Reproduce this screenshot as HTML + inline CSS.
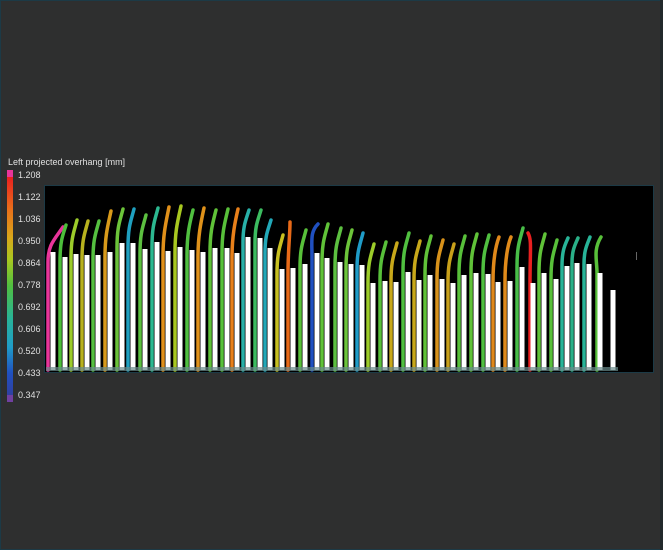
<!DOCTYPE html>
<html><head><meta charset="utf-8"><style>
html,body{margin:0;padding:0}
body{width:663px;height:550px;background:#2e2f2f;position:relative;overflow:hidden;font-family:"Liberation Sans",sans-serif}
.frame{position:absolute;left:0;top:0;width:661px;height:548px;border:1px solid #1c3a46}
.t{position:absolute;font-size:9px;color:#e0e0e0;line-height:10px}
</style></head><body>
<div class="frame"></div>
<div style="position:absolute;left:660px;top:0;width:3px;height:550px;background:#22292b"></div>
<div class="t" style="left:8px;top:157px">Left projected overhang [mm]</div>
<svg width="663" height="550" style="position:absolute;left:0;top:0">
<defs><linearGradient id="g" x1="0" y1="0" x2="0" y2="1">
<stop offset="0" stop-color="#e82020"/><stop offset="0.15" stop-color="#e8701a"/><stop offset="0.28" stop-color="#d8a81a"/><stop offset="0.38" stop-color="#a8c820"/><stop offset="0.5" stop-color="#50c040"/><stop offset="0.65" stop-color="#28b498"/><stop offset="0.78" stop-color="#1f9cc8"/><stop offset="0.9" stop-color="#2050c0"/><stop offset="1" stop-color="#3040a0"/></linearGradient></defs>
<rect x="7" y="170" width="6" height="7" fill="#e8359a"/>
<rect x="7" y="177" width="6" height="218" fill="url(#g)"/>
<rect x="7" y="395" width="6" height="7" fill="#7040a0"/>
<rect x="44.5" y="185.5" width="609" height="187" fill="#000" stroke="#1c3a46"/>
<g fill="none" stroke-width="3.5" stroke-linecap="round">
<path stroke="#e8359a" d="M48 370V262C48 245 54 240 63 227"/>
<path stroke="#4cbf3a" d="M60 370V262C60 240 63 235 66 225"/>
<path stroke="#9ccc2a" d="M71 370V259C71 237 74 232 77 220"/>
<path stroke="#b8b21e" d="M82 370V260C82 238 85 233 88 221"/>
<path stroke="#55c040" d="M93 370V260C93 238 96 233 99 221"/>
<path stroke="#d89a1a" d="M105 370V257C105 235 108 225 111 211"/>
<path stroke="#6cc43a" d="M117 370V248C117 226 120 221 123 209"/>
<path stroke="#1fa0c0" d="M128 370V248C128 226 131 221 134 209"/>
<path stroke="#5cc040" d="M140 370V254C140 232 143 227 146 215"/>
<path stroke="#2cb890" d="M152 370V247C152 225 155 220 158 208"/>
<path stroke="#e0901a" d="M163 370V256C163 234 166 222 169 207"/>
<path stroke="#a8c820" d="M175 370V252C175 230 178 220 181 206"/>
<path stroke="#50c040" d="M187 370V255C187 233 190 222 193 210"/>
<path stroke="#e0921a" d="M198 370V257C198 235 201 222 204 208"/>
<path stroke="#60c238" d="M210 370V253C210 231 213 222 216 210"/>
<path stroke="#58c03a" d="M222 370V253C222 231 225 222 228 209"/>
<path stroke="#e8801a" d="M232 370V258C232 236 235 222 238 209"/>
<path stroke="#28b0a8" d="M243 370V242C243 225 246 220 249 210"/>
<path stroke="#3cbc60" d="M255 370V243C255 225 258 220 261 210"/>
<path stroke="#22a8b8" d="M265 370V253C265 235 268 230 271 220"/>
<path stroke="#c8c020" d="M277 370V274C277 252 280 247 283 235"/>
<path stroke="#e86a18" d="M288 370V273C288 251 290 235 290 222"/>
<path stroke="#58c03a" d="M300 370V269C300 247 303 242 306 230"/>
<path stroke="#2050c0" d="M312 370V258C312 240 310 232 318 224"/>
<path stroke="#60c238" d="M322 370V263C322 241 325 236 328 224"/>
<path stroke="#5cc040" d="M335 370V267C335 245 338 240 341 228"/>
<path stroke="#6cc43a" d="M346 370V269C346 247 349 242 352 230"/>
<path stroke="#1f9cc8" d="M357 370V270C357 250 360 245 363 233"/>
<path stroke="#9ccc2a" d="M368 370V283C368 261 371 256 374 244"/>
<path stroke="#58c03a" d="M380 370V281C380 259 383 254 386 242"/>
<path stroke="#c8a81a" d="M391 370V282C391 260 394 255 397 243"/>
<path stroke="#50c040" d="M403 370V272C403 250 406 245 409 233"/>
<path stroke="#c8a81a" d="M414 370V280C414 258 417 253 420 241"/>
<path stroke="#60c238" d="M425 370V275C425 253 428 248 431 236"/>
<path stroke="#d8921a" d="M437 370V279C437 257 440 252 443 240"/>
<path stroke="#c8a01a" d="M448 370V283C448 261 451 256 454 244"/>
<path stroke="#58c03a" d="M459 370V275C459 253 462 248 465 236"/>
<path stroke="#60c238" d="M471 370V273C471 251 474 246 477 234"/>
<path stroke="#50c040" d="M483 370V274C483 252 486 247 489 235"/>
<path stroke="#e0881a" d="M493 370V282C493 260 496 245 499 237"/>
<path stroke="#e08a1a" d="M505 370V281C505 259 508 244 511 237"/>
<path stroke="#48be48" d="M517 370V267C517 245 520 240 523 228"/>
<path stroke="#e82020" d="M530 370V283C530 250 532 240 528 233"/>
<path stroke="#60c238" d="M539 370V273C539 251 542 246 545 234"/>
<path stroke="#58c03a" d="M551 370V279C551 257 554 252 557 240"/>
<path stroke="#28b498" d="M562 370V266C562 250 565 245 568 238"/>
<path stroke="#2ab088" d="M572 370V263C572 250 575 245 578 238"/>
<path stroke="#28b498" d="M584 370V264C584 250 587 245 590 237"/>
<path stroke="#58c03a" d="M597 370V273C597 260 593 250 601 237"/>
</g>
<path fill="none" stroke="#fff" stroke-width="5" d="M53 370V252M65 370V257M76 370V254M87 370V255M98 370V255M110 370V252M122 370V243M133 370V243M145 370V249M157 370V242M168 370V251M180 370V247M192 370V250M203 370V252M215 370V248M227 370V248M237 370V253M248 370V237M260 370V238M270 370V248M282 370V269M293 370V268M305 370V264M317 370V253M327 370V258M340 370V262M351 370V264M362 370V265M373 370V283M385 370V281M396 370V282M408 370V272M419 370V280M430 370V275M442 370V279M453 370V283M464 370V275M476 370V273M488 370V274M498 370V282M510 370V281M522 370V267M533 370V283M544 370V273M556 370V279M567 370V266M577 370V263M589 370V264M600 370V273M613 370V290"/>
<rect x="46" y="367" width="572" height="4" fill="#6a8a8a" opacity="0.7"/>
<rect x="636" y="252" width="1" height="8" fill="#666"/>
</svg>
<div class="t" style="left:18px;top:170px">1.208</div>
<div class="t" style="left:18px;top:192px">1.122</div>
<div class="t" style="left:18px;top:214px">1.036</div>
<div class="t" style="left:18px;top:236px">0.950</div>
<div class="t" style="left:18px;top:258px">0.864</div>
<div class="t" style="left:18px;top:280px">0.778</div>
<div class="t" style="left:18px;top:302px">0.692</div>
<div class="t" style="left:18px;top:324px">0.606</div>
<div class="t" style="left:18px;top:346px">0.520</div>
<div class="t" style="left:18px;top:368px">0.433</div>
<div class="t" style="left:18px;top:390px">0.347</div>
</body></html>
